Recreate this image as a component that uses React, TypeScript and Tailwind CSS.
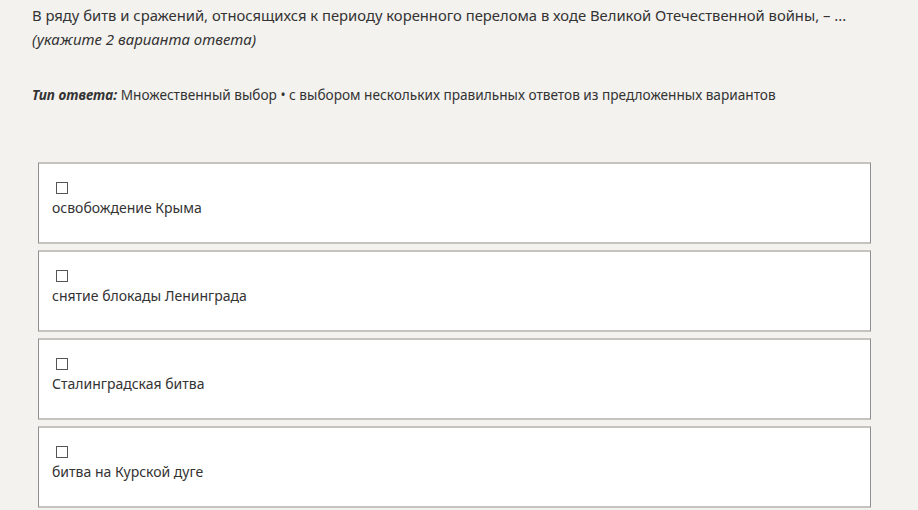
const options = [
    "освобождение Крыма",
    "снятие блокады Ленинграда",
    "Сталинградская битва",
    "битва на Курской дуге",
];

function Option({ label }: { label: string }) {
    return (
        <label className="flex flex-col items-start h-[82px] bg-white border-x border-x-[#8f8f8f] border-y-2 border-y-[#c6c3be] pl-[13px] pt-[18px]">
            <span className="ml-1 w-3 h-3 border border-[#555] bg-white" />
            <span className="mt-1 text-[14px] leading-5 text-[#333]">{label}</span>
        </label>
    );
}

export default function App() {
    return (
        <div className="min-h-screen bg-[#f3f2ef] font-['Noto_Sans',sans-serif] text-[#333] pl-8 pr-[47px]">
            <p className="pt-[3px] text-[14.8px] leading-[24px]">
                В ряду битв и сражений, относящихся к периоду коренного перелома в ходе Великой Отечественной войны, – ...
            </p>
            <p className="text-[15px] leading-[24px] italic">(укажите 2 варианта ответа)</p>

            <p className="mt-[34px] text-[13.65px] leading-5">
                <span className="font-bold italic">Тип ответа:</span> Множественный выбор • с выбором нескольких правильных ответов из предложенных вариантов
            </p>

            <div className="mt-[57px] ml-[6px] flex flex-col gap-[6px]">
                {options.map((o) => (
                    <Option key={o} label={o} />
                ))}
            </div>
        </div>
    );
}
